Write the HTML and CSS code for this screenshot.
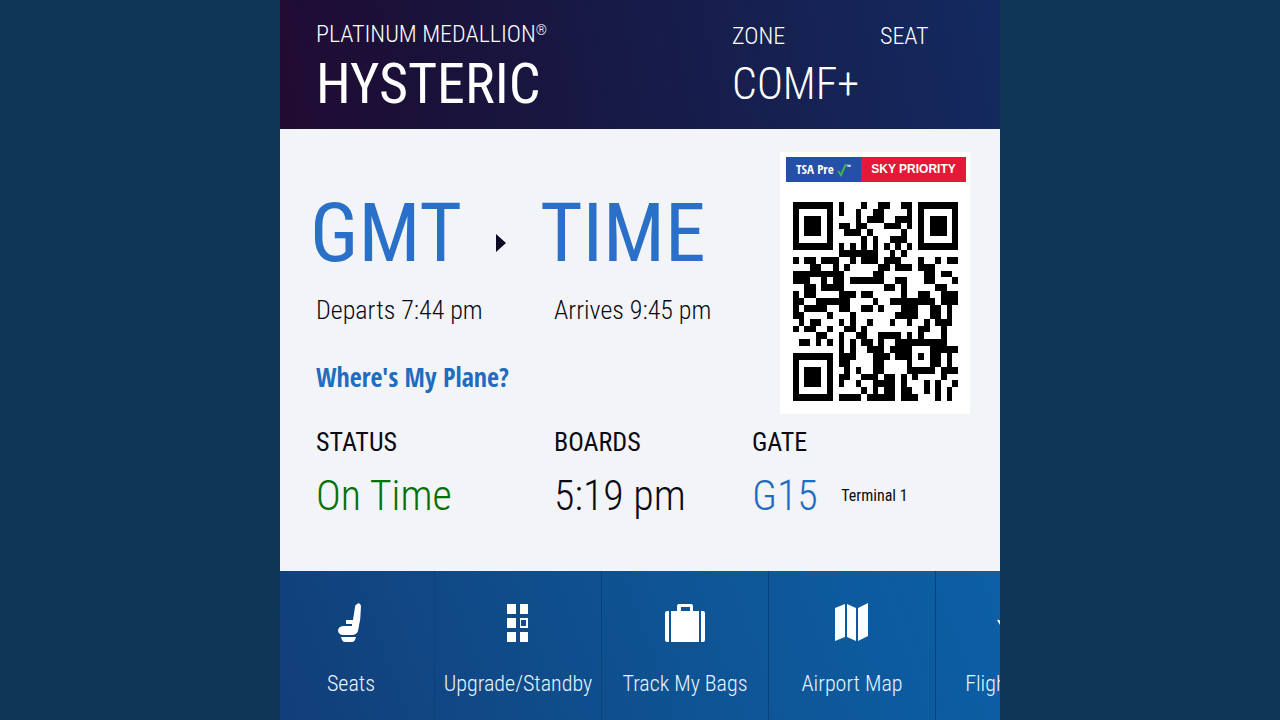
FILE: index.html
```html
<!DOCTYPE html>
<html lang="en">
<head>
<meta charset="UTF-8">
<meta name="viewport" content="width=device-width, initial-scale=1">
<title>Boarding Pass</title>
<link rel="stylesheet" href="styles.css">
</head>
<body>

<div class="pass">
	<header class="pass-head">
		<div class="passenger">
			<p class="tier">PLATINUM MEDALLION<sup>&reg;</sup></p>
			<h1>HYSTERIC</h1>
		</div>
		<div class="zone">
			<p class="head-label">ZONE</p>
			<p class="head-value">COMF+</p>
		</div>
		<div class="seat">
			<p class="head-label">SEAT</p>
		</div>
	</header>

	<main class="pass-body">
		<div class="trip">
			<div class="flight">
				<div class="route">
					<span class="city">GMT</span>
					<svg class="arrow" viewBox="0 0 10 18" aria-hidden="true"><path d="M0 0L10 9L0 18Z"/></svg>
					<span class="city">TIME</span>
				</div>
				<div class="times">
					<p>Departs 7:44 pm</p>
					<p>Arrives 9:45 pm</p>
				</div>
				<a class="where" href="#plane">Where's My Plane?</a>
			</div>
			<div class="code">
				<div class="badges">
					<span class="tsa">TSA Pre<svg viewBox="0 0 10 14" aria-hidden="true"><path d="M1 8L4 12L9 1"/></svg><sup>&trade;</sup></span>
					<span class="sky">SKY PRIORITY</span>
				</div>
				<svg class="qr" viewBox="0 0 29 29" preserveAspectRatio="none" role="img" aria-label="Boarding pass code"><path id="qr"/></svg>
			</div>
		</div>
		<dl class="details">
			<div>
				<dt>STATUS</dt>
				<dd class="ontime">On Time</dd>
			</div>
			<div>
				<dt>BOARDS</dt>
				<dd>5:19 pm</dd>
			</div>
			<div>
				<dt>GATE</dt>
				<dd><a href="#gate">G15</a> <small>Terminal 1</small></dd>
			</div>
		</dl>
	</main>

	<nav class="tabs">
		<button type="button">
			<svg viewBox="0 0 44 44"><path d="M28 3Q31 1 32 5Q32 18 29 30Q28 33 24 34H13Q9 33 9 29Q10 25 15 25H23V23H17V19H24L26 6Q26 4 28 3ZM12 36H27L26 39Q25 41 23 41H16Q14 41 13 39Z"/></svg>
			Seats
		</button>
		<button type="button">
			<svg viewBox="0 0 44 44"><path fill-rule="evenodd" d="M11 3H20V13H11ZM24 3H32V13H24ZM11 17H20V27H11ZM24 17H32V27H24ZM25 19V25H30V19ZM11 31H20V41H11ZM24 31H32V41H24Z"/></svg>
			Upgrade/Standby
		</button>
		<button type="button">
			<svg viewBox="0 0 44 44"><path fill-rule="evenodd" d="M8 10H14V5Q14 3 16 3H28Q30 3 30 5V10H36V41H8ZM18 10H27V6H18ZM4 10H6V41H4Q2 41 2 39V12Q2 10 4 10ZM38 10H40Q42 10 42 12V39Q42 41 40 41H38Z"/></svg>
			Track My Bags
		</button>
		<button type="button">
			<svg viewBox="0 0 44 44"><path d="M5 7L15 3V36L5 40ZM17 3L26 7V40L17 36ZM28 7L38 2V35L28 40Z"/></svg>
			Airport Map
		</button>
		<button type="button">
			<svg viewBox="0 0 44 44"><path d="M0 19Q2 18 4 21L12 25L22 22L13 7H17L31 19L40 17Q45 19 41 22L8 32Z"/></svg>
			Flight Status
		</button>
	</nav>
</div>

<script>
var rows = [
	'11111110100010011001101111111',
	'10000010100100110000101000001',
	'10111010000101110011101011101',
	'10111010110110001110101011101',
	'10111010011101000001001011101',
	'10000010000010100111001000001',
	'11111110101010101010101111111',
	'00000000111111100101000000000',
	'10110111001011101110001001011',
	'00011001010000011011101110000',
	'11111111100000110000000110110',
	'11100101101111110011000110001',
	'00110111100000001101000001100',
	'10110000111011000001001100111',
	'11001111110000100111111110111',
	'10111100110011010001110011010',
	'11000010001000000011110011010',
	'01011000101001000100100101110',
	'10110010011010000000001100100',
	'00001100100110011110101000100',
	'01101010101011010011111111100',
	'00000000101001110111100011111',
	'11111110111000111011101011010',
	'10000010110000110000100011010',
	'10111010010100110000111110111',
	'10111010110011101101010000100',
	'10111010100100111101000101001',
	'10000010000010101101100101010',
	'11111110111101111101110001010'
];
var d = '';
for(var y=0; y<rows.length; y++) {
	for(var x=0; x<29; x++) {
		if( rows[y].charAt(x) == '1' )
			d += 'M'+ x +' '+ y +'h1v1h-1z';
	}
}
document.getElementById('qr').setAttribute('d', d);
</script>
</body>
</html>
```

FILE: styles.css
```css
* {
	margin: 0;
	padding: 0;
	box-sizing: border-box;
}
body {
	background: #0f3557;
	color: #0a0a14;
	font-family: "Roboto Condensed", "Roboto", sans-serif;
	font-weight: 300;
	font-size: 26px;
	line-height: 32px;
}
a {
	color: #1f6cc0;
	text-decoration: none;
}
.pass {
	display: flex;
	flex-direction: column;
	width: 56.25%;
	min-width: 600px;
	min-height: 100vh;
	margin: 0 auto;
	background: #f2f4f8;
	overflow: hidden;
}

.pass-head {
	display: grid;
	grid-template-columns: 416fr 148fr 120fr;
	padding: 18px 0 11px 36px;
	color: #fff;
	background: linear-gradient(80deg, #220b33, #1a1139 20%, #171b48 50%, #142a60);
}
.tier,
.head-label {
	font-size: 24px;
}
.tier sup {
	font-size: 14px;
	line-height: 0;
	vertical-align: 7px;
}
h1 {
	font-size: 56px;
	font-weight: 400;
	line-height: 68px;
}
.zone,
.seat {
	padding-top: 2px;
}
.head-value {
	font-size: 44px;
	line-height: 64px;
}

.pass-body {
	flex: 1;
	padding: 23px 30px 32px 36px;
}
.trip {
	display: flex;
	justify-content: space-between;
}
.flight {
	flex: 1;
	padding-top: 28px;
}
.route {
	display: flex;
	align-items: center;
	gap: 34px;
	margin-left: -6px;
	color: #2a70c8;
}
.city {
	font-size: 82px;
	font-weight: 400;
	line-height: 106px;
}
.arrow {
	width: 10px;
	height: 18px;
	margin-top: 20px;
	fill: #0a0a20;
}
.times {
	display: grid;
	grid-template-columns: 238px 1fr;
	margin-top: 8px;
}
.where {
	display: inline-block;
	margin-top: 35px;
	font-family: "Open Sans Condensed", sans-serif;
	font-weight: 700;
}

.code {
	width: 190px;
	padding: 5px 4px 13px 6px;
	background: #fff;
}
.badges {
	display: grid;
	grid-template-columns: 75px 1fr;
	color: #fff;
	line-height: 25px;
	white-space: nowrap;
}
.tsa {
	padding-left: 10px;
	background: #2450a8;
	font-family: "Open Sans Condensed", sans-serif;
	font-weight: 700;
	font-size: 13px;
}
.tsa svg {
	width: 10px;
	height: 14px;
	margin-left: 3px;
	vertical-align: middle;
	fill: none;
	stroke: #3fb54a;
	stroke-width: 2;
}
.tsa sup {
	font-size: 6px;
	line-height: 0;
}
.sky {
	background: #e51937;
	font-family: "Liberation Sans", Arial, sans-serif;
	font-weight: 700;
	font-size: 12px;
	text-align: center;
}
.qr {
	display: block;
	width: 165px;
	height: 199px;
	margin: 20px 0 0 7px;
	shape-rendering: crispEdges;
}

.details {
	display: grid;
	grid-template-columns: 238fr 198fr 218fr;
	margin-top: 12px;
}
dt {
	font-weight: 400;
}
dd {
	font-size: 42px;
	line-height: 76px;
}
dd small {
	margin-left: 14px;
	font-size: 16px;
	font-weight: 400;
	vertical-align: 9px;
}
.ontime {
	color: #067006;
}

.tabs {
	display: flex;
	margin-left: -12px;
	background: linear-gradient(70deg, #123e78, #0e5596 60%, #0c5fa6);
}
.tabs button {
	flex: 0 0 167px;
	display: flex;
	flex-direction: column;
	align-items: center;
	gap: 22px;
	padding: 30px 0 19px;
	border: 0;
	border-right: 1px solid #0a437c;
	background: none;
	color: #e8f4ff;
	font: inherit;
	font-size: 22px;
	line-height: 34px;
}
.tabs svg {
	width: 44px;
	height: 44px;
	fill: #fff;
}
```
